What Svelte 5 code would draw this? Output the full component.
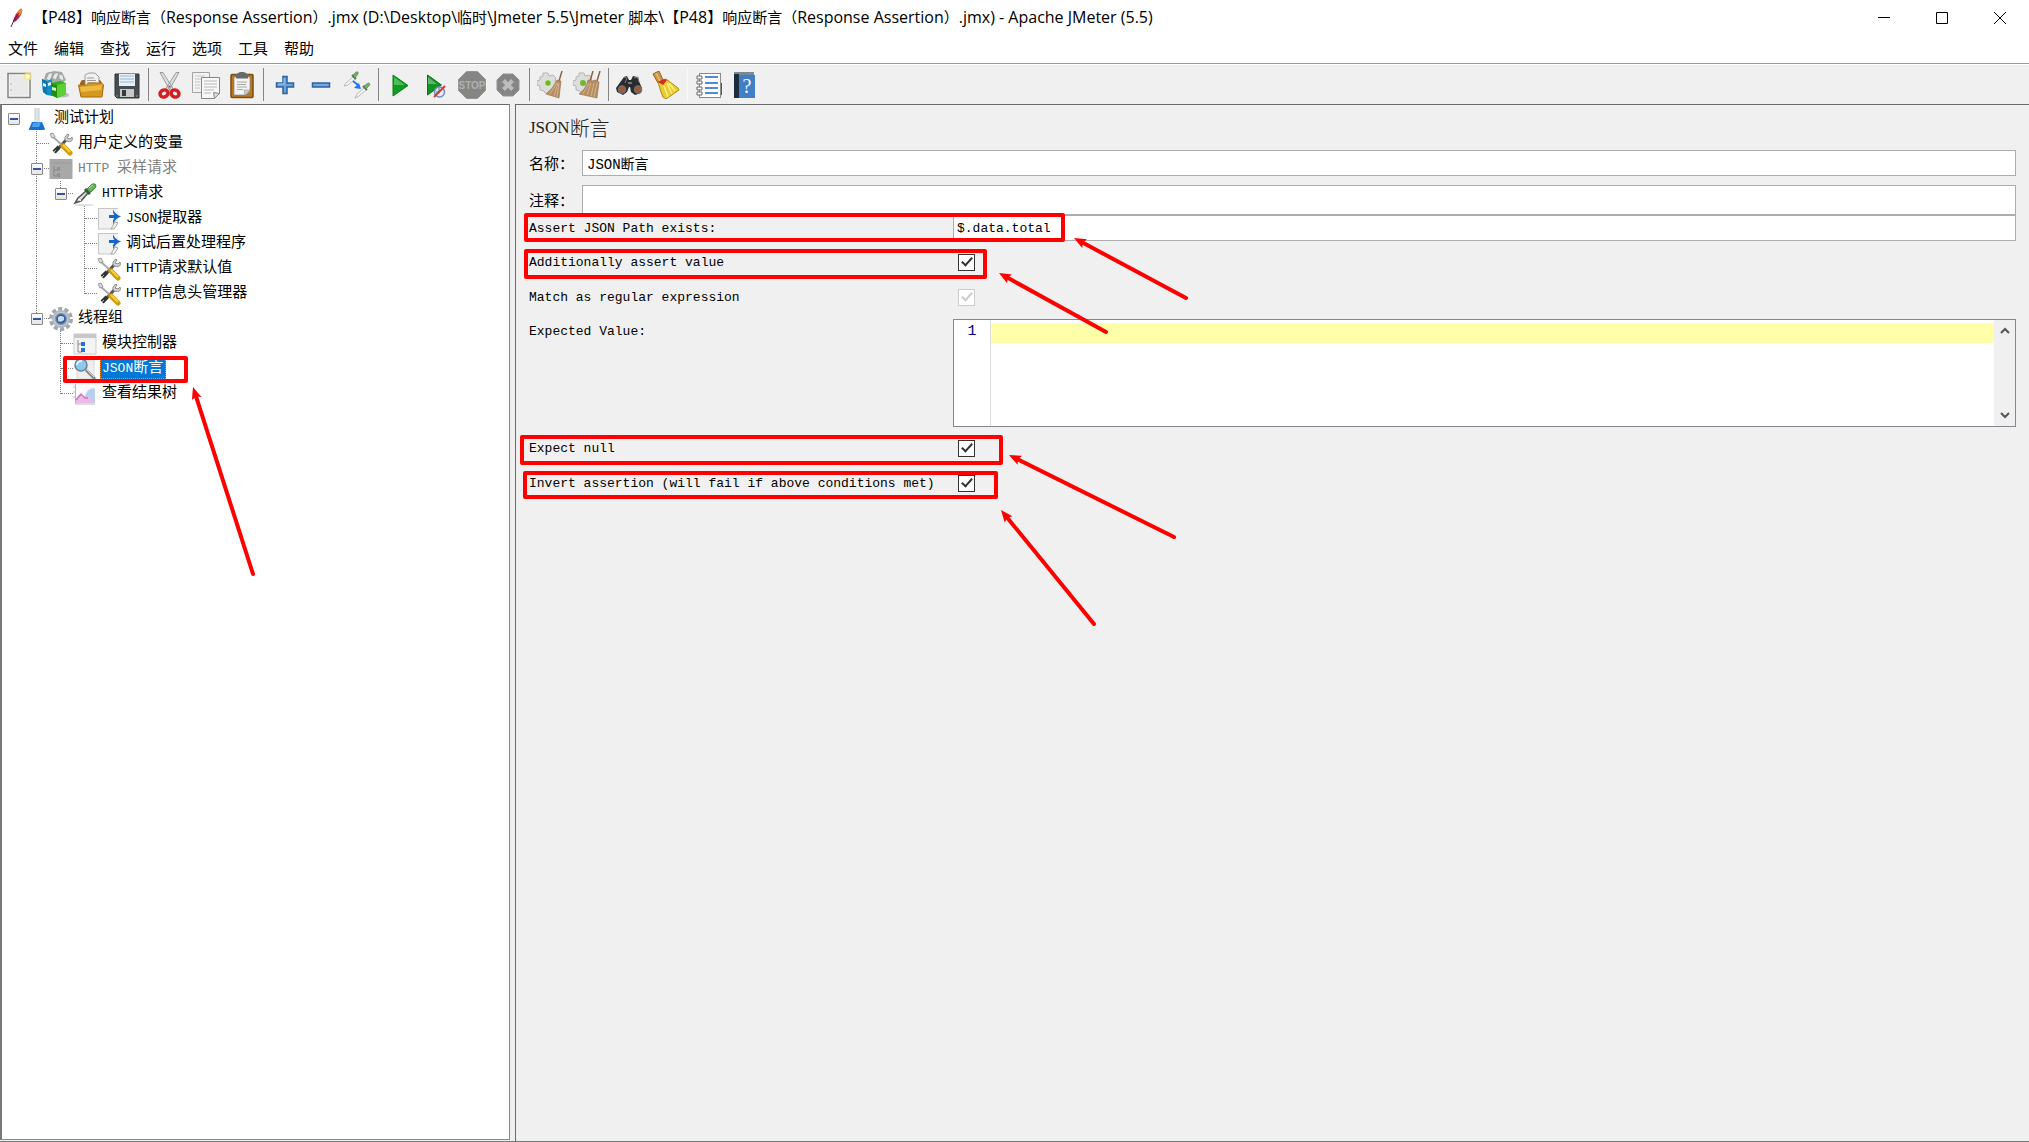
<script>
	// toolbar icons, 28 x 28
	const toolIcons = {
		new: `<rect x="3" y="2.500" width="22" height="24" fill="#f4f4f4" stroke="#84857f" stroke-width="1.500"/><rect x="5" y="4.500" width="18" height="20" fill="#e9e9e9"/><path d="M6 12v2M6 18v2" stroke="#b5b5b5"/><circle cx="23" cy="5.500" r="4" fill="#f9ed6a" opacity=".7"/><circle cx="23" cy="5.500" r="2" fill="#fffdd8"/>`,
		templates: `<path d="M3 8l2-6 8-2 8 1 4 8-7 5-12-2z" fill="#a3abab"/><path d="M5 8l3-6 4 0-3 8zM11 7l3-5 4 0-3 7zM18 8l0-5 4 1 1 6z" fill="#e5e9e9" stroke="#929898" stroke-width=".7"/><ellipse cx="22" cy="24" rx="6" ry="2.500" fill="#9b9b9b" opacity=".6"/><path d="M1 8l5 2 5-2v17l-5-1-4-3z" fill="#128fc9"/><path d="M1 8l5 2v14l-4-3z" fill="#0d75b2"/><path d="M2 12l3 1v3l-3-1zM7 12l3-1v3l-3 1z" fill="#d8f2ff"/><path d="M10 12l9-2 6 2v11l-8 4-7-3z" fill="#35ad20"/><path d="M10 12l6 2v13l-6-3z" fill="#228d13"/><path d="M16 14l9-2v11l-9 4z" fill="#5bcf35"/><path d="M11 16l4 1v3l-4-1z" fill="#d9f5cb"/>`,
		open: `<path d="M3 12l2-3h18l2 3v13H3z" fill="#9b661b"/><path d="M8 13V4l4-2h6l4 4v9H7z" fill="#f1f1ee" stroke="#888" stroke-width=".8"/><path d="M10 7h7M10 9.500h9M10 12h9" stroke="#9b9b9b"/><path d="M1.500 14l8 0 2-2 13 0 2 2-1.500 12H4z" fill="#d6981f" stroke="#a46b0b"/><path d="M3 16l22-2-1 5-20 2z" fill="#edba45"/>`,
		save: `<path d="M2 3h24v24H4l-2-2z" fill="#484b4f" stroke="#303235"/><rect x="6" y="3" width="16" height="12" fill="#e7f0f7"/><path d="M7 5h14M7 8h14M7 11h14" stroke="#b1c9dd" stroke-width="1.500"/><rect x="7" y="18" width="14" height="8" fill="#c6c9cc"/><rect x="9" y="19" width="4" height="6" fill="#37393c"/><path d="M3 25h2M23 25h2" stroke="#999"/>`,
		cut: `<path d="M4 1.500l3 0 10 16-3 2zM23 1.500l-3 0-10 16 3 2z" fill="#dedede" stroke="#888" stroke-width=".8"/><circle cx="13.500" cy="15.500" r="1" fill="#555"/><g fill="none" stroke="#d51d22" stroke-width="3.500"><ellipse cx="8" cy="22.500" rx="4" ry="3.500" transform="rotate(-25 8 22.500)"/><ellipse cx="19" cy="22.500" rx="4" ry="3.500" transform="rotate(25 19 22.500)"/></g>`,
		copy: `<path d="M.5 1.500h17v20H.5z" fill="#f2f2f1" stroke="#a3a3a3"/><path d="M3 5h10M3 8h8M3 11h5M3 14h5M3 17h5" stroke="#c6c6c6"/><path d="M9.500 6.500h18v16l-5 5h-13z" fill="#f8f8f8" stroke="#858585"/><path d="M12 10h13M12 13h13M12 16h13M12 19h10M12 22h7" stroke="#b7b7b7"/><path d="M27.500 22.500l-6-1 1 6z" fill="#ddd" stroke="#888"/>`,
		paste: `<rect x="3" y="3.500" width="22" height="23" rx="1" fill="#b87820" stroke="#7b4e11" stroke-width="1.500"/><path d="M6 6h16v14l-4 4H6z" fill="#f4f4f2" stroke="#858585" stroke-width=".7"/><path d="M8 3.500c2-1 2-2.500 6-2.500s4 1.500 6 2.500v4H8z" fill="#67696a"/><path d="M9 11h10M9 13.500h9M9 16h10M9 18.500h6" stroke="#a8a8a8"/><path d="M22 19l-6 0 1 5z" fill="#c9c9c9" stroke="#999" stroke-width=".6"/>`,
		plus: `<path d="M12 5.500h4v6.500h6.500v4H16v6.500h-4V16H5.500v-4H12z" fill="#6ea3d9" stroke="#2a61a3" stroke-width="1.500"/><path d="M13 7v6H7" fill="none" stroke="#a6c8eb"/>`,
		minus: `<rect x="5.500" y="12" width="17" height="4" fill="#78a8da" stroke="#2a61a3" stroke-width="1.500"/>`,
		toggle: `<path d="M1 15l2-3 7-6 2 2-7 6z" fill="#f6f6f6" stroke="#aaa" stroke-width=".8"/><path d="M9 4l4 4" stroke="#5a7555" stroke-width="2"/><path d="M10 4l3-3q3-1 2 2l-3 4z" fill="#74b067" stroke="#5c8a54" stroke-width=".7"/><path d="M10 10l5 4" stroke="#2876e8" stroke-width="2"/><path d="M18 18l-7-1 5-5z" fill="#2876e8"/><path d="M12 27l2-4 7-6 2 2-7 6z" fill="#f6f6f6" stroke="#aaa" stroke-width=".8"/><path d="M20 15l4 4" stroke="#5a7555" stroke-width="2"/><path d="M21 15l4-3q3 0 1 3l-3 3z" fill="#74b067" stroke="#5c8a54" stroke-width=".7"/>`,
		run: `<path d="M7 4v21l15-10.500z" fill="#109c23" stroke="#088018"/><path d="M8 6v8l11 0z" fill="#4cbf56"/>`,
		runNoPause: `<path d="M5.500 4v20l14-10z" fill="#159222" stroke="#08751a"/><path d="M6 6v7h9z" fill="#5eb565"/><circle cx="17.500" cy="21" r="5" fill="#e7edf6" stroke="#6b8fbd" stroke-width="1.500"/><path d="M17 17v4h-3" fill="none" stroke="#456b9d"/><path d="M12 26L23 15" stroke="#e42e35" stroke-width="2"/>`,
		stop: `<path d="M8.500 .5h11l8 8v11l-8 8h-11l-8-8v-11z" fill="#858585" stroke="#959595"/><text x="14" y="18" text-anchor="middle" font-family="Liberation Sans" font-weight="bold" font-size="10" fill="#b0b0b0">STOP</text>`,
		shutdown: `<path d="M9 3h10l6 6v10l-6 6H9l-6-6V9z" fill="#858585" stroke="#929292"/><path d="M9.500 9.500l9 9M18.500 9.500l-9 9" stroke="#bdbdbd" stroke-width="4"/>`,
		clear: `<path d="M6 2h5l1 3 4-1 3 3-1 3 3 1v5l-3 1 0 3-5 1-1 2-4-1-1-2-4-1v-4l-3-1v-4l3-1v-3l3-1z" fill="#dcdddc" stroke="#b4b5b5"/><circle cx="11" cy="12" r="3.500" fill="#73b72e" stroke="#d8e7c6" stroke-width="1.500"/><path d="M25 0l-3 10" stroke="#8b653e" stroke-width="1.500"/><path d="M20 9l4 1-2 17-13-4q7-5 11-14z" fill="#b68d62" stroke="#9c7853" stroke-width=".7"/><path d="M20 12l-7 11M21 12l-4 13M22 12l-2 14" stroke="#d4b48c"/>`,
		clearAll: `<path d="M6 2h5l1 3 4-1 3 3-1 3 3 1v5l-3 1 0 3-5 1-1 2-4-1-1-2-4-1v-4l-3-1v-4l3-1v-3l3-1z" fill="#dcdddc" stroke="#b4b5b5"/><circle cx="10" cy="12" r="3" fill="#73b72e"/><path d="M20 0l-3 10M27 0l-3 10" stroke="#8b653e" stroke-width="1.500"/><path d="M15 9l4 1 3-1 4 2-2 16-18-4q7-5 9-14z" fill="#b68d62" stroke="#9c7853" stroke-width=".7"/><path d="M16 12l-6 11M18 12l-4 12M21 12l-3 13M24 12l-3 14" stroke="#d4b48c"/>`,
		search: `<path d="M8 6l3-1 2 4h2l2-4 4 1 5 11-1 5-6 2-4-3-1-5h-1l-2 5-4 3-6-3-1-4z" fill="#292b2d"/><path d="M8 6l3 1-2 5M18 7l4-1 1 5" fill="none" stroke="#797d80"/><circle cx="6" cy="18.500" r="3.500" fill="#a5572e" stroke="#6d6e6f" stroke-width="1.500"/><circle cx="22" cy="18.500" r="3.500" fill="#a5572e" stroke="#6d6e6f" stroke-width="1.500"/><path d="M12 12h4" stroke="#777" stroke-width="2"/>`,
		reset: `<path d="M1 3l6-3 4 9-5 3z" fill="#d19843" stroke="#925f24"/><path d="M4 2l4 8" stroke="#edca83"/><path d="M6 11l8-3 12 9 1 2-13 9-3-2-2-5z" fill="#eacb34" stroke="#aa8a10"/><path d="M6 11l5 3 4-5-3-1z" fill="#d62a20"/><path d="M12 15l4 11M15 12l5 11M17 12l6 8" stroke="#fff07d" stroke-width="1.500"/>`,
		functions: `<path d="M24 12h3v6h-3z" fill="#1262be"/><path d="M24 18h3v6h-3z" fill="#178b26"/><rect x="4.500" y="2.500" width="21" height="24" fill="#fff" stroke="#8a8a8a"/><path d="M10 6h13M10 12h13M10 17h13M10 22h13" stroke="#1d66cd" stroke-width="1.500"/><path d="M2 5h5v3H2zM2 10h5v3H2zM2 16h5v3H2zM2 21h5v3H2z" fill="#fff" stroke="#666"/>`,
		help: `<path d="M3 1h20v4H3z" fill="#788998"/><path d="M3 3h5v24H3z" fill="#1d2c3d"/><path d="M8 4h16v23H8z" fill="#407ec8"/><text x="16" y="22" text-anchor="middle" font-family="Liberation Serif" font-size="20" fill="#fff">?</text>`
	};

	// tree icons, 24 x 24
	const tools = `<path d="M6 20L18 7" stroke="#555" stroke-width="3"/><path d="M5 20l5-5" stroke="#333" stroke-width="4"/><path d="M5 20l2-2" stroke="#bbb"/><path d="M17 9q-3-4 2-7l1 1-2 3 3 1 2-2q2 6-6 4z" fill="#d5d5d5" stroke="#8b8b8b"/><path d="M3 4l10 9" stroke="#aaa" stroke-width="2"/><path d="M1 2l3-1 2 4-3 1z" fill="#ddd" stroke="#999"/><path d="M14 14l7 7" stroke="#d29a06" stroke-width="5" stroke-linecap="round"/><path d="M14 13l7 7" stroke="#f7cf42" stroke-width="2"/>`;
	const post = `<path d="M1 1h20v16l-4 5H1z" fill="#f1f1f1"/><path d="M1.500 1v21M1 1.500h20M1 22h14" stroke="#c6c6c6"/><path d="M14 22l4-7 3 1-4 6z" fill="#f5f5f5" stroke="#a5a5a5"/><path d="M12 9.500h8" stroke="#1565cc" stroke-width="3"/><path d="M16 2q1 5 8 7.500-6 2-8 8v-4l2-4-2-4z" fill="#1565cc"/>`;
	const treeIcons = {
		plan: `<path d="M10 1h4v11l5 10H5l5-10z" fill="#dfe4e8"/><path d="M10 1v12M14 1v12" stroke="#c4cbd1"/><path d="M7 15h10l3 7q0 1-2 1H6q-3 0-2-1z" fill="#1871d1"/><path d="M8 16l8-1-2 5H7z" fill="#4ca2ee"/>`,
		config: tools,
		sampleOff: `<rect x=".5" y="2" width="23" height="20" fill="#a8a8a8"/><path d="M1 6h22" stroke="#9b9b9b"/><path d="M5 9v10h3M5 13h3" fill="none" stroke="#858585"/><path d="M8 10h3v4H8zM8 16h3v4H8z" fill="#919191"/>`,
		sampler: `<ellipse cx="11" cy="23" rx="10" ry="1" fill="#ddd"/><path d="M2 21l3-5 8-7 2 2-7 8z" fill="#ddd" stroke="#555" stroke-width="1.500"/><path d="M5 17l3 2" stroke="#fff"/><path d="M12 7l5 5" stroke="#345f34" stroke-width="3"/><path d="M14 7l5-5q4-1 4 2 0 2-5 6z" fill="#68b65c" stroke="#46883f"/><path d="M16 6l4-3" stroke="#b1dda8"/>`,
		post,
		threads: `<circle cx="12" cy="12" r="10" fill="none" stroke="#a4a7ab" stroke-width="4" stroke-dasharray="4 2.280"/><circle cx="12" cy="12" r="8" fill="#d3d6da" stroke="#b4b8bd" stroke-width="2"/><circle cx="12" cy="12" r="5.500" fill="#345b95" stroke="#7d97bb" stroke-width="1.500"/><path d="M9 10q3-2 6 0v3q-3 3-6 1z" fill="#c8ddf0"/>`,
		module: `<rect x="1" y="2" width="22" height="20" fill="#f4f4f4" stroke="#ccc"/><path d="M1 2h22v4H1z" fill="#c8c8c8"/><path d="M5 8v12h4M5 12h4" fill="none" stroke="#888"/><path d="M8 10h4v4H8zM8 16h4v4H8z" fill="#2a72cf"/>`,
		assertion: `<path d="M4 3h17v19H4z" fill="#eee" stroke="#d8d8d8"/><path d="M13 13l9 9" stroke="#888" stroke-width="3"/><path d="M14 13l7 7" stroke="#ddd"/><circle cx="8" cy="8" r="6" fill="#8fc7ed" stroke="#62839a" stroke-width="1.500"/><path d="M4 8q0-4 5-4" fill="none" stroke="#d8f1ff" stroke-width="2"/>`,
		listener: `<path d="M2 3h20v19H2z" fill="#fbfbfc"/><path d="M2.500 2v20H22M0 5h2M0 10h2M0 15h2" fill="none" stroke="#bbb"/><path d="M12 14q2-7 8-8l2 1v14h-8z" fill="#b7cff1"/><path d="M3 21v-4l4-5 4 4 4-2 6 6v1z" fill="#ecbce6"/><path d="M3 18l5-6 4 4 3 0" fill="none" stroke="#d46fc0" stroke-width="1.500"/>`
	};

	const title = '【P48】响应断言（Response Assertion）.jmx (D:\\Desktop\\临时\\Jmeter 5.5\\Jmeter 脚本\\【P48】响应断言（Response Assertion）.jmx) - Apache JMeter (5.5)';

	const menus = ['文件', '编辑', '查找', '运行', '选项', '工具', '帮助'];

	const toolGroups = [
		[['new', '新建'], ['templates', '模板'], ['open', '打开'], ['save', '保存']],
		[['cut', '剪切'], ['copy', '复制'], ['paste', '粘贴']],
		[['plus', '展开'], ['minus', '折叠'], ['toggle', '切换']],
		[['run', '启动'], ['runNoPause', '不停顿启动'], ['stop', '停止'], ['shutdown', '关闭']],
		[['clear', '清除'], ['clearAll', '清除全部']],
		[['search', '查找'], ['reset', '重置查找']],
		[['functions', '函数助手'], ['help', '帮助']]
	];

	// guides: one cell per level below the root
	//   T = branch, L = last branch, I = line passing by, space = nothing
	const nodes = [
		{ label: '测试计划', icon: 'plan', guides: '', open: true },
		{ label: '用户定义的变量', icon: 'config', guides: 'T' },
		{ label: 'HTTP 采样请求', icon: 'sampleOff', guides: 'T', open: true, disabled: true },
		{ label: 'HTTP请求', icon: 'sampler', guides: 'IL', open: true },
		{ label: 'JSON提取器', icon: 'post', guides: 'I T' },
		{ label: '调试后置处理程序', icon: 'post', guides: 'I T' },
		{ label: 'HTTP请求默认值', icon: 'config', guides: 'I T' },
		{ label: 'HTTP信息头管理器', icon: 'config', guides: 'I L' },
		{ label: '线程组', icon: 'threads', guides: 'L', open: true },
		{ label: '模块控制器', icon: 'module', guides: ' T' },
		{ label: 'JSON断言', icon: 'assertion', guides: ' T' },
		{ label: '查看结果树', icon: 'listener', guides: ' L' }
	];

	const guideClass = { T: 'tee', L: 'corner', I: 'pass', ' ': 'blank' };

	let selected = $state('JSON断言');
	let name = $state('JSON断言');
	let comment = $state('');
	let jsonPath = $state('$.data.total');
	let assertValue = $state(true);
	let isRegex = $state(true);
	let expected = $state('');
	let expectNull = $state(true);
	let invert = $state(true);

	// latin runs get a size of their own next to the chinese ones
	function splitRuns(text) {
		return text.match(/[\x20-\x7e]+|[^\x20-\x7e]+/g);
	}

	const marks = [
		{ x: 65, y: 358, w: 121, h: 23 },
		{ x: 526, y: 215, w: 537, h: 25 },
		{ x: 526, y: 251, w: 459, h: 26 },
		{ x: 522, y: 437, w: 479, h: 26 },
		{ x: 525, y: 473, w: 471, h: 24 }
	];

	const arrows = [
		{ x1: 193, y1: 387, x2: 253, y2: 574 },
		{ x1: 1074, y1: 238, x2: 1186, y2: 298 },
		{ x1: 999, y1: 273, x2: 1106, y2: 332 },
		{ x1: 1009, y1: 455, x2: 1174, y2: 537 },
		{ x1: 1001, y1: 510, x2: 1094, y2: 624 }
	];

	function angle(a) {
		return (Math.atan2(a.y2 - a.y1, a.x2 - a.x1) * 180) / Math.PI;
	}

	function length(a) {
		return Math.hypot(a.x2 - a.x1, a.y2 - a.y1);
	}
</script>

{#snippet runs(text)}
	{#each splitRuns(text) as run}<span class:latin={run < '\x7f'}>{run}</span>{/each}
{/snippet}

<div class="window">
	<header class="titlebar">
		<svg class="feather" viewBox="0 0 16 20" aria-hidden="true">
			<path d="M4 14Q5 7 11 1q3-1 2 3-2 7-8 10z" fill="#d0213c" />
			<path d="M11 1q3-1 2 3l-3 4-2-3z" fill="#f08a24" />
			<path d="M4 14l2-5 2 3-3 2z" fill="#8b2270" />
			<path d="M2 19q2-7 8-14" fill="none" stroke="#5e1b55" />
		</svg>
		<span class="title">{@render runs(title)}</span>
		<div class="window-buttons">
			<button aria-label="最小化"><svg viewBox="0 0 12 12"><path d="M0 5.500h12" /></svg></button>
			<button aria-label="最大化"><svg viewBox="0 0 12 12"><path d="M.5.5h11v11H.5z" /></svg></button>
			<button aria-label="关闭"><svg viewBox="0 0 12 12"><path d="M0 0l12 12M12 0L0 12" /></svg></button>
		</div>
	</header>

	<nav class="menubar">
		{#each menus as menu}
			<button>{menu}</button>
		{/each}
	</nav>

	<div class="toolbar">
		{#each toolGroups as group, i}
			{#if i > 0}
				<span class="separator" class:faint={i === 6}></span>
			{/if}
			{#each group as [icon, label]}
				<button aria-label={label} disabled={icon === 'stop' || icon === 'shutdown'}>
					<svg viewBox="0 0 28 28">{@html toolIcons[icon]}</svg>
				</button>
			{/each}
		{/each}
	</div>

	<div class="split">
		<aside class="tree">
			{#each nodes as node}
				<div class="node">
					<span class="guide">
						{#if node.guides === ''}
							<button class="expander" aria-label="折叠"></button>
						{/if}
					</span>
					{#each node.guides.split('') as guide, i}
						<span class="guide {guideClass[guide]}">
							{#if node.open && i === node.guides.length - 1}
								<button class="expander" aria-label="折叠"></button>
							{/if}
						</span>
					{/each}
					<svg class="node-icon" viewBox="0 0 24 24" aria-hidden="true">{@html treeIcons[node.icon]}</svg>
					<button
						class="node-label"
						class:selected={selected === node.label}
						class:off={node.disabled}
						onclick={() => (selected = node.label)}
					>{@render runs(node.label)}</button>
				</div>
			{/each}
		</aside>

		<main class="panel">
			<h1>{@render runs('JSON断言')}</h1>
			<div class="head-row">
				<label for="name">名称：</label>
				<input id="name" type="text" bind:value={name} />
			</div>
			<div class="head-row comment">
				<label for="comment">注释：</label>
				<input id="comment" type="text" bind:value={comment} />
			</div>

			<div class="fields">
				<label for="jsonPath">Assert JSON Path exists:</label>
				<input id="jsonPath" type="text" bind:value={jsonPath} />
			</div>
			<div class="fields check">
				<label for="assertValue">Additionally assert value</label>
				<input id="assertValue" type="checkbox" bind:checked={assertValue} />
			</div>
			<div class="fields check">
				<label for="isRegex">Match as regular expression</label>
				<input id="isRegex" type="checkbox" bind:checked={isRegex} disabled />
			</div>
			<div class="fields expected">
				<label for="expected">Expected Value:</label>
				<div class="editor">
					<span class="line-number">1</span>
					<textarea id="expected" bind:value={expected}></textarea>
					<div class="scrollbar">
						<button aria-label="向上"><svg viewBox="0 0 10 8"><path d="M1 6l4-4 4 4" /></svg></button>
						<button aria-label="向下"><svg viewBox="0 0 10 8"><path d="M1 2l4 4 4-4" /></svg></button>
					</div>
				</div>
			</div>
			<div class="fields check">
				<label for="expectNull">Expect null</label>
				<input id="expectNull" type="checkbox" bind:checked={expectNull} />
			</div>
			<div class="fields check">
				<label for="invert">Invert assertion (will fail if above conditions met)</label>
				<input id="invert" type="checkbox" bind:checked={invert} />
			</div>
		</main>
	</div>

	<svg class="marks" aria-hidden="true">
		{#each marks as m}
			<rect x={m.x} y={m.y} width={m.w} height={m.h} />
		{/each}
		{#each arrows as a}
			<g transform="translate({a.x1} {a.y1}) rotate({angle(a)})">
				<path class="shaft" d="M8 0H{length(a)}" />
				<path class="tip" d="M0 0L12-5 10 0 12 5z" />
			</g>
		{/each}
	</svg>
</div>

<style>
	:global(body) {
		margin: 0;
		background: #f0f0f0;
	}
	.window {
		position: relative;
		display: flex;
		flex-direction: column;
		min-height: 100vh;
		box-sizing: border-box;
		border-bottom: 1px solid #77787c;
		background: #f0f0f0;
		color: #000;
		font-family: 'Liberation Mono', 'Noto Sans CJK SC', monospace;
		font-size: 15px;
	}
	button {
		margin: 0;
		padding: 0;
		border: 0;
		background: none;
		color: inherit;
		font: inherit;
	}
	.titlebar {
		display: flex;
		align-items: center;
		height: 36px;
		padding-left: 9px;
		background: #fff;
		font-family: 'Open Sans', 'Noto Sans CJK SC', sans-serif;
	}
	.feather {
		width: 16px;
		height: 20px;
		margin-right: 8px;
	}
	.title {
		flex: 1;
		line-height: 34px;
		height: 36px;
		white-space: pre;
	}
	.title .latin {
		font-size: 16px;
	}
	.window-buttons {
		display: flex;
	}
	.window-buttons button {
		display: flex;
		align-items: center;
		justify-content: center;
		width: 58px;
		height: 36px;
	}
	.window-buttons svg {
		width: 12px;
		height: 12px;
		fill: none;
		stroke: #000;
	}
	.menubar {
		display: flex;
		gap: 16px;
		height: 27px;
		padding-left: 8px;
		border-bottom: 1px solid #999;
		background: #fff;
		font-family: 'Noto Sans CJK SC', sans-serif;
	}
	.menubar button {
		height: 24px;
		line-height: 22px;
	}
	.toolbar {
		display: flex;
		align-items: center;
		height: 39px;
		padding-left: 1px;
		border-top: 1px solid #fff;
	}
	.toolbar button {
		display: flex;
		justify-content: center;
		width: 36px;
	}
	.toolbar svg {
		width: 28px;
		height: 28px;
	}
	.separator {
		width: 1px;
		height: 33px;
		margin: 0 3px;
		background: #858585;
	}
	.separator.faint {
		background: #fafafa;
	}
	.split {
		display: flex;
		flex: 1;
		gap: 5px;
	}
	.tree {
		width: 510px;
		box-sizing: border-box;
		padding-top: 1px;
		border: 1px solid #828790;
		border-top-color: #696969;
		border-left: 2px solid #77787c;
		margin-bottom: 1px;
		background: #fff;
	}
	.node {
		display: flex;
		align-items: center;
		height: 25px;
	}
	.guide {
		position: relative;
		display: flex;
		align-items: center;
		justify-content: center;
		width: 24px;
		height: 25px;
	}
	.guide:first-child {
		width: 23px;
	}
	.tee::before,
	.pass::before,
	.corner::before {
		content: '';
		position: absolute;
		top: 0;
		left: 11px;
		height: 25px;
		border-left: 1px dotted #808080;
	}
	.corner::before {
		height: 13px;
	}
	.tee::after,
	.corner::after {
		content: '';
		position: absolute;
		top: 12px;
		left: 12px;
		width: 12px;
		border-top: 1px dotted #808080;
	}
	.expander {
		position: relative;
		z-index: 1;
		display: flex;
		align-items: center;
		justify-content: center;
		width: 12px;
		height: 12px;
		border: 1px solid #888;
		border-radius: 1px;
		background: linear-gradient(#fff, #e4e4e4);
	}
	.expander::before {
		content: '';
		width: 8px;
		height: 2px;
		background: #3653a8;
	}
	.node-icon {
		width: 24px;
		height: 24px;
	}
	.node-label {
		display: flex;
		align-items: center;
		height: 21px;
		margin-left: 3px;
		padding: 0 3px 0 2px;
		line-height: 19px;
		white-space: pre;
	}
	.node-label.off {
		color: #808080;
	}
	.node-label.selected {
		outline: 1px dotted #ff8728;
		outline-offset: -1px;
		background: #0078d7;
		color: #fff;
	}
	.latin {
		font-size: 13px;
	}
	.panel {
		flex: 1;
		min-width: 0;
		padding: 0 13px;
		border-top: 1px solid #696969;
		border-left: 1px solid #696969;
	}
	h1 {
		display: flex;
		align-items: center;
		height: 45px;
		margin: 0;
		font-family: 'Liberation Serif', 'Noto Sans CJK SC', serif;
		font-size: 20px;
		font-weight: 300;
		color: #222;
	}
	h1 .latin {
		font-size: 17px;
	}
	.head-row {
		display: flex;
		align-items: center;
		height: 26px;
		margin-bottom: 9px;
	}
	.head-row label {
		width: 53px;
		white-space: nowrap;
	}
	.head-row input {
		flex: 1;
	}
	.comment {
		height: 30px;
		margin-bottom: 0;
	}
	input[type='text'] {
		box-sizing: border-box;
		min-width: 0;
		height: 100%;
		margin: 0;
		padding: 0 4px;
		border: 1px solid #abadb3;
		border-radius: 0;
		background: #fff;
		color: #000;
		font-family: inherit;
		font-size: 14px;
	}
	.fields {
		display: grid;
		grid-template-columns: 424px 1fr;
		align-items: center;
		height: 26px;
		font-size: 13px;
	}
	.fields input[type='text'] {
		padding: 0 3px;
		font-size: 13px;
	}
	.fields + .check {
		height: 35px;
	}
	.fields:not(.check) + .check {
		margin-top: 4px;
	}
	input[type='checkbox'] {
		appearance: none;
		display: flex;
		justify-content: center;
		box-sizing: border-box;
		width: 17px;
		height: 17px;
		margin: 0 0 0 5px;
		border: 1px solid #333;
		background: #fff;
	}
	input[type='checkbox']:checked::after {
		content: '';
		width: 4px;
		height: 9px;
		border: solid #333;
		border-width: 0 2px 2px 0;
		transform: rotate(42deg);
	}
	input[type='checkbox']:disabled,
	input[type='checkbox']:disabled::after {
		border-color: #ccc;
	}
	.expected {
		align-items: start;
		height: auto;
		margin-top: 4px;
	}
	.expected label {
		line-height: 26px;
	}
	.editor {
		display: flex;
		height: 106px;
		border: 1px solid #828790;
		background: #fff;
	}
	.line-number {
		width: 36px;
		border-right: 1px solid #ddd;
		color: #000080;
		font-size: 15px;
		line-height: 24px;
		text-align: center;
	}
	textarea {
		flex: 1;
		min-width: 0;
		padding: 3px 0;
		border: 0;
		outline: 0;
		resize: none;
		background: linear-gradient(#ffffaa, #ffffaa) 0 3px / 100% 20px no-repeat;
		font-family: inherit;
		font-size: 13px;
		line-height: 20px;
	}
	.scrollbar {
		display: flex;
		flex-direction: column;
		justify-content: space-between;
		width: 21px;
		background: #f0f0f0;
	}
	.scrollbar button {
		height: 22px;
	}
	.scrollbar svg {
		width: 10px;
		height: 8px;
		fill: none;
		stroke: #555;
		stroke-width: 2;
	}
	.marks {
		position: absolute;
		inset: 0;
		width: 100%;
		height: 100%;
		z-index: 2;
		pointer-events: none;
	}
	.marks rect {
		fill: none;
		stroke: #f00;
		stroke-width: 4;
		stroke-linejoin: round;
	}
	.shaft {
		stroke: #f00;
		stroke-width: 4;
		stroke-linecap: round;
	}
	.tip {
		fill: #f00;
	}
</style>
